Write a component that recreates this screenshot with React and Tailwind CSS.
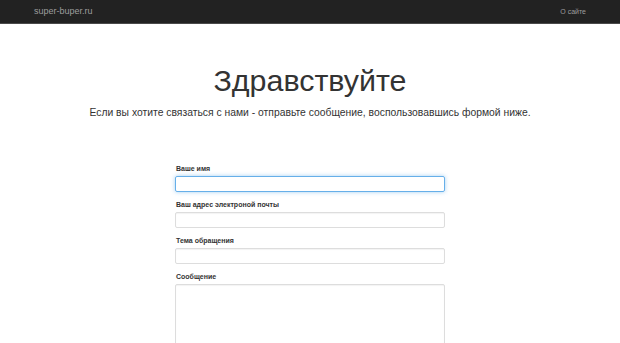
import React from 'react'

const fields = [
    { label: 'Ваше имя', focus: true },
    { label: 'Ваш адрес электроной почты' },
    { label: 'Тема обращения' },
]

const App = () => {
    return (
        <div className='min-h-screen bg-white text-[#333]' style={{ fontFamily: '"Liberation Sans", Arial, sans-serif' }}>
            <div className='h-[24px] bg-[#222] border-b border-[#4a4a4a] flex items-center justify-between px-[34px]'>
                <span className='text-[9px] text-[#9d9d9d] leading-none'>super-buper.ru</span>
                <span className='text-[7px] text-[#9d9d9d] leading-none'>О сайте</span>
            </div>

            <div className='flex flex-col items-center'>
                <h1 className='mt-[40px] text-[30.4px] leading-[33px] font-normal'>Здравствуйте</h1>
                <p className='mt-[8px] text-[10.35px] leading-[15px]'>Если вы хотите связаться с нами - отправьте сообщение, воспользовавшись формой ниже.</p>

                <form className='mt-[44px] w-[270px] flex flex-col'>
                    {fields.map((f) => (
                        <div key={f.label} className='flex flex-col mb-[8px]'>
                            <label className='text-[7px] leading-[10px] font-bold mb-[2px] pl-[1px]'>{f.label}</label>
                            <input
                                className={f.focus
                                    ? 'h-[16px] rounded-[2px] border border-[#66afe9] shadow-[0_0_4px_rgba(102,175,233,0.6)] outline-none'
                                    : 'h-[16px] rounded-[2px] border border-[#ddd] shadow-[inset_0_1px_1px_rgba(0,0,0,0.05)] outline-none'}
                            />
                        </div>
                    ))}
                    <div className='flex flex-col'>
                        <label className='text-[7px] leading-[10px] font-bold mb-[2px] pl-[1px]'>Сообщение</label>
                        <textarea className='h-[70px] rounded-[2px] border border-[#ddd] shadow-[inset_0_1px_1px_rgba(0,0,0,0.05)] outline-none resize-none' />
                    </div>
                </form>
            </div>
        </div>
    )
}

export default App
